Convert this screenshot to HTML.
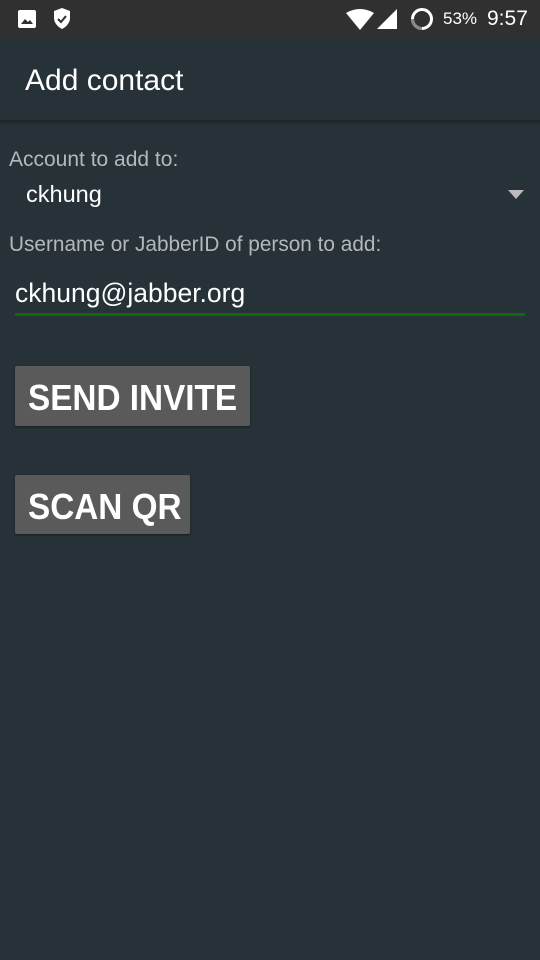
<!DOCTYPE html>
<html><head><meta charset="utf-8"><style>
body{margin:0;width:540px;height:960px;background:#263238;font-family:"Liberation Sans",sans-serif;position:relative;overflow:hidden}
.a{position:absolute;white-space:nowrap}
.btn{position:absolute;background:#5a5a5a;border-radius:2px;box-shadow:0 1px 2px rgba(0,0,0,.4);color:#fff;font-weight:bold;font-size:36px}
.btn span{position:absolute;white-space:nowrap;left:13px;top:11px;transform-origin:left top;transform:scaleX(.925)}
</style></head><body>
<div class="a" style="left:0;top:0;width:540px;height:37px;background:#303030"></div>
<svg class="a" style="left:17px;top:9px" width="20" height="20" viewBox="0 0 20 20"><rect x="1" y="1" width="18" height="18" rx="2" fill="#fff"/><path d="M4 15l4-5 3 3 2-2 3 4z" fill="#303030"/></svg>
<svg class="a" style="left:52px;top:7px" width="20" height="24" viewBox="0 0 20 24"><path d="M10 1L2 4v7c0 5 4 9 8 11 4-2 8-6 8-11V4z" fill="#fff"/><path d="M6 12l3 3 5-6" stroke="#303030" stroke-width="2" fill="none"/></svg>
<svg class="a" style="left:345px;top:9px" width="30" height="22" viewBox="0 0 30 22"><path d="M1 4Q15-4 29 4L15 21z" fill="#fff"/></svg>
<svg class="a" style="left:377px;top:9px" width="20" height="20" viewBox="0 0 20 20"><path d="M20 0V20H0z" fill="#fff"/></svg>
<svg class="a" style="left:410px;top:7px" width="24" height="24" viewBox="0 0 24 24"><circle cx="12" cy="12" r="9.5" stroke="#fff" stroke-width="3" fill="none"/><path d="M12 21.5A9.5 9.5 0 0 1 2.5 12" stroke="#888" stroke-width="3" fill="none"/></svg>
<div class="a" style="left:443px;top:9px;color:#fff;font-size:17px">53%</div>
<div class="a" style="left:487px;top:7px;color:#fff;font-size:21px">9:57</div>
<div class="a" style="left:0;top:120px;width:540px;height:6px;background:linear-gradient(#1d2529,#263238)"></div>
<div class="a" style="left:25px;top:64px;color:#fff;font-size:30px">Add contact</div>
<div class="a" style="left:9px;top:148px;color:#b4b8ba;font-size:21px">Account to add to:</div>
<div class="a" style="left:26px;top:181px;color:#fff;font-size:23.5px">ckhung</div>
<svg class="a" style="left:508px;top:190px" width="16" height="9"><path d="M0 0H16L8 9z" fill="#bbb"/></svg>
<div class="a" style="left:9px;top:233px;color:#b4b8ba;font-size:20.8px">Username or JabberID of person to add:</div>
<div class="a" style="left:15px;top:278px;color:#fff;font-size:26.5px">ckhung@jabber.org</div>
<div class="a" style="left:15px;top:313px;width:510px;height:3px;background:#0c6a0c"></div>
<div class="btn" style="left:15px;top:366px;width:235px;height:60px"><span>SEND INVITE</span></div>
<div class="btn" style="left:15px;top:475px;width:175px;height:59px"><span>SCAN QR</span></div>
</body></html>
